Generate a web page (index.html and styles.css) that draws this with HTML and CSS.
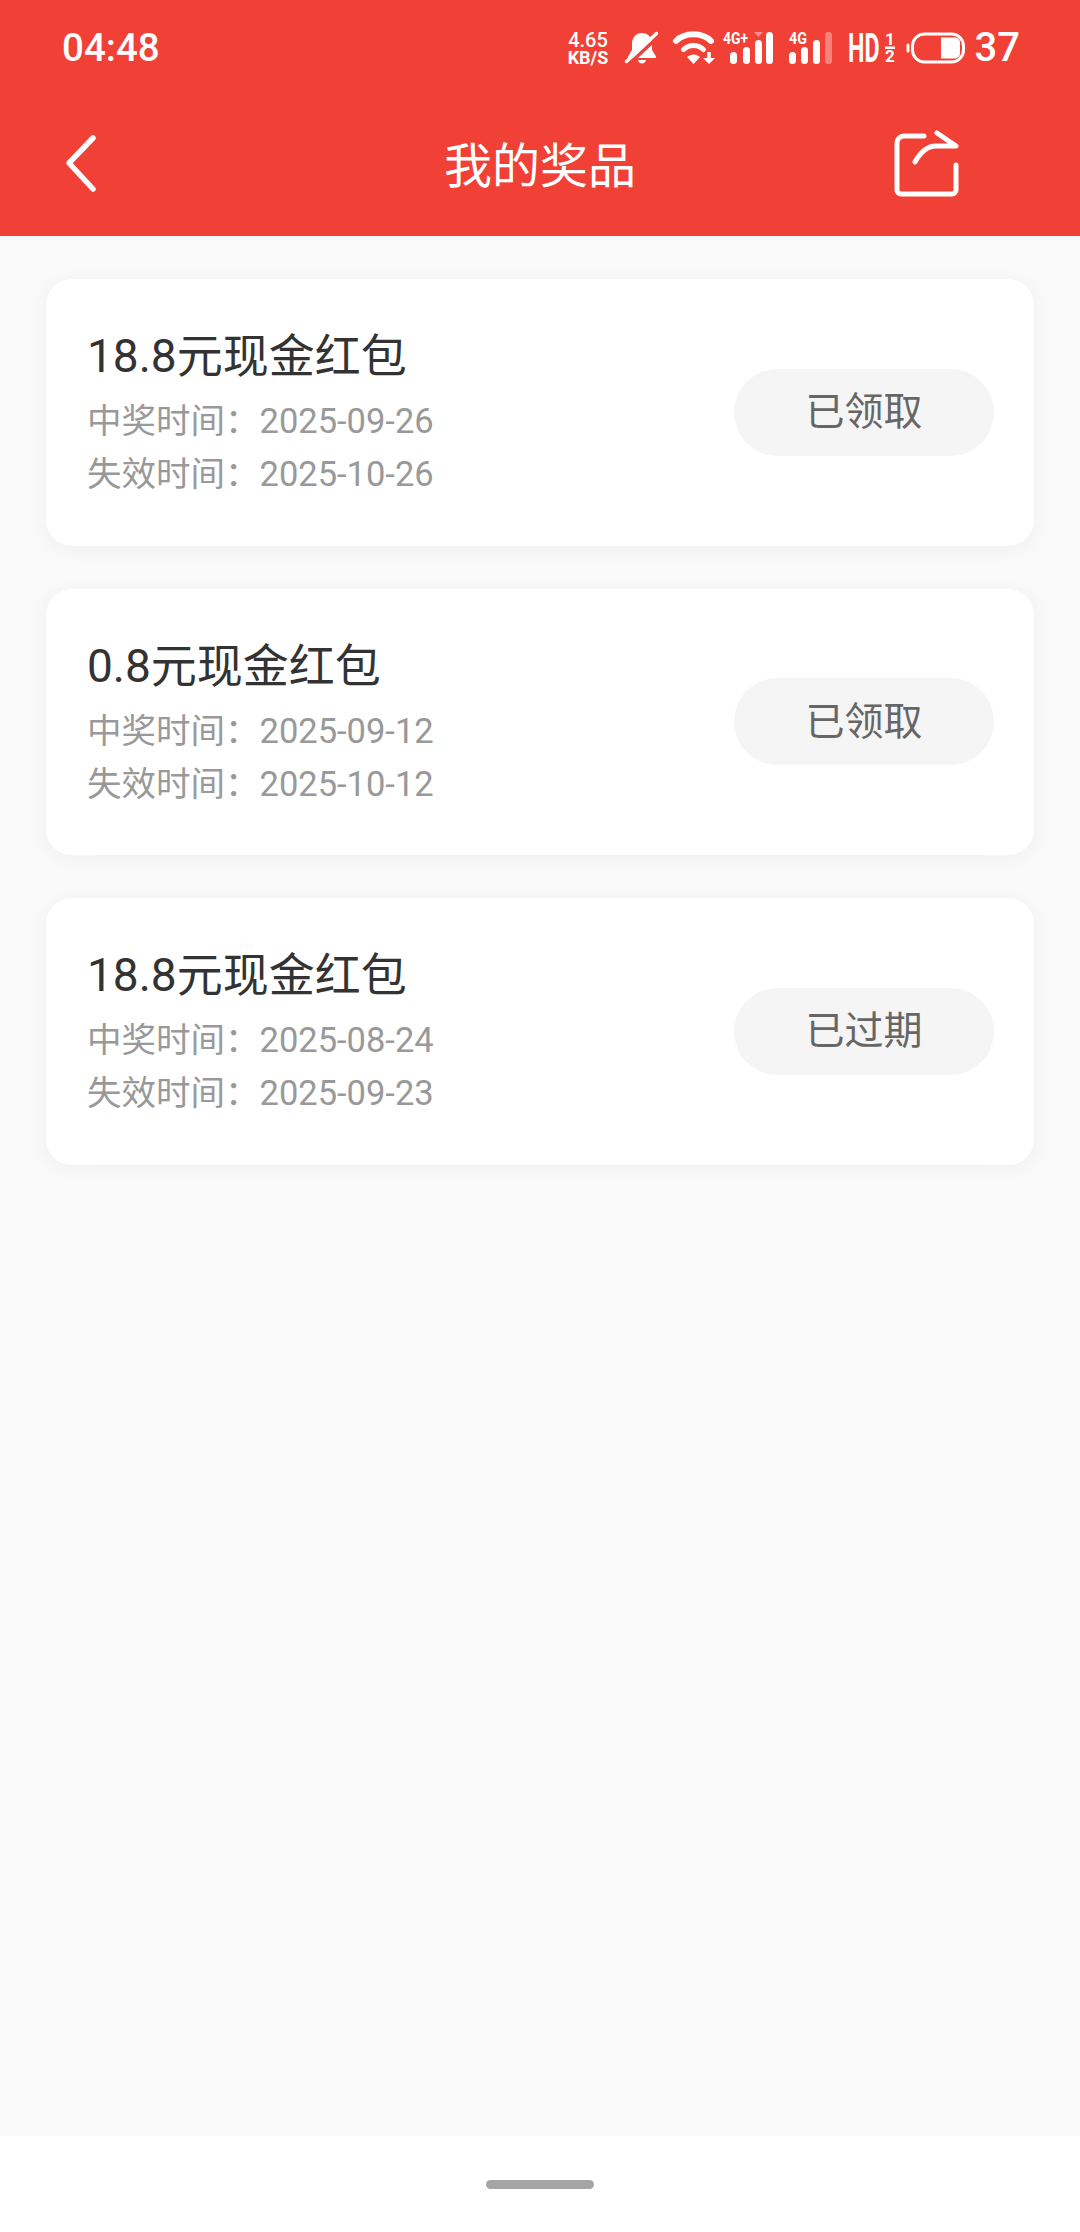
FILE: index.html
```html
<!DOCTYPE html>
<html lang="zh-CN">
<head>
    <meta charset="UTF-8">
    <meta name="viewport" content="width=device-width, initial-scale=1.0">
    <title>我的奖品</title>
    <link rel="stylesheet" href="styles.css">
</head>
<body>
    <header class="header">
        <div class="status-bar">
            <span class="time">04:48</span>
            <div class="status-icons">
                <div class="speed"><span>4.65</span><span>KB/S</span></div>
                <svg class="icon-bell" width="34" height="34" viewBox="0 0 34 34">
                    <path d="M17 2c-6 0-10 4.500-10 11v6l-4 6.500c-.4.800 0 1.500 1 1.500h26c1 0 1.400-.7 1-1.500l-4-6.500v-6C27 6.500 23 2 17 2z" fill="#fff"/>
                    <path d="M13 29h8c-.5 2-2 3.500-4 3.500S13.500 31 13 29z" fill="#fff"/>
                    <path d="M4 33L34 5" stroke="#f14035" stroke-width="3.500"/>
                    <path d="M1.500 30.500L31.500 2.500" stroke="#fff" stroke-width="3.500" stroke-linecap="round"/>
                </svg>
                <svg class="icon-wifi" width="43" height="34" viewBox="0 0 43 34">
                    <path d="M3 10C12 1 29 1 38 10" fill="none" stroke="#fff" stroke-width="6" stroke-linecap="round"/>
                    <path d="M10.500 18.500C16 13 25 13 30.500 18.500" fill="none" stroke="#fff" stroke-width="5" stroke-linecap="round"/>
                    <path d="M14 26c4-3.500 9-3.500 13 0l-6.500 7z" fill="#fff"/>
                    <path d="M36 21v7" stroke="#fff" stroke-width="3.500"/>
                    <path d="M30 27h12l-6 6z" fill="#fff"/>
                </svg>
                <svg class="icon-signal" width="50" height="34" viewBox="0 0 50 34">
                    <text class="net-label" x="0" y="13" textLength="25" lengthAdjust="spacingAndGlyphs">4G+</text>
                    <rect x="7" y="21" width="7" height="12" rx="3.500" fill="#fff"/>
                    <rect x="20" y="16" width="7" height="17" rx="3.500" fill="#fff"/>
                    <rect x="32" y="9" width="7" height="24" rx="3.500" fill="#fff"/>
                    <path d="M31 1h9l-4.500 5z" fill="#fff" opacity=".4"/>
                    <rect x="43" y="1" width="7" height="32" rx="3.500" fill="#fff"/>
                </svg>
                <svg class="icon-signal" width="45" height="34" viewBox="0 0 45 34">
                    <text class="net-label" x="1" y="13" textLength="18" lengthAdjust="spacingAndGlyphs">4G</text>
                    <rect x="1" y="21" width="7" height="12" rx="3.500" fill="#fff"/>
                    <rect x="13" y="16" width="7" height="17" rx="3.500" fill="#fff"/>
                    <rect x="25" y="9" width="7" height="24" rx="3.500" fill="#fff"/>
                    <rect x="37" y="1" width="7" height="32" rx="3" fill="#fff" opacity=".35"/>
                </svg>
                <svg class="icon-hd" width="48" height="34" viewBox="0 0 48 34">
                    <text class="hd-label" x="0" y="31" transform="scale(.58 1)">HD</text>
                    <text class="sim-label" x="37" y="14">1</text>
                    <rect x="37" y="15.500" width="10" height="2.500" fill="#fff"/>
                    <text class="sim-label" x="37" y="31">2</text>
                </svg>
                <svg class="icon-battery" width="59" height="32" viewBox="0 0 59 32">
                    <path d="M2 13v6" stroke="#fff" stroke-width="3" stroke-linecap="round"/>
                    <rect x="6.500" y="2" width="51" height="28" rx="12" fill="none" stroke="#fff" stroke-width="3"/>
                    <path d="M35 5.500h14a5 5 0 0 1 5 5v11a5 5 0 0 1-5 5H35z" fill="#fff"/>
                </svg>
                <span class="battery-level">37</span>
            </div>
        </div>
        <nav class="nav">
            <svg class="back" width="32" height="60" viewBox="0 0 32 60">
                <path d="M28 4L4 29l24 26" fill="none" stroke="#fff" stroke-width="5.500" stroke-linecap="round" stroke-linejoin="round"/>
            </svg>
            <h1>我的奖品</h1>
            <svg class="share" width="68" height="68" viewBox="0 0 68 68">
                <path d="M32 6H12a7 7 0 0 0-7 7v47a4 4 0 0 0 4 4h51a4 4 0 0 0 4-4V35" fill="none" stroke="#fff" stroke-width="5" stroke-linecap="round"/>
                <path d="M45 3l19 13H44c-9 0-16 7-21 16" fill="none" stroke="#fff" stroke-width="5" stroke-linecap="round" stroke-linejoin="round"/>
            </svg>
        </nav>
    </header>

    <main class="list">
        <div class="card">
            <div class="card-info">
                <h2>18.8元现金红包</h2>
                <p>中奖时间：2025-09-26</p>
                <p>失效时间：2025-10-26</p>
            </div>
            <span class="state">已领取</span>
        </div>
        <div class="card">
            <div class="card-info">
                <h2>0.8元现金红包</h2>
                <p>中奖时间：2025-09-12</p>
                <p>失效时间：2025-10-12</p>
            </div>
            <span class="state">已领取</span>
        </div>
        <div class="card">
            <div class="card-info">
                <h2>18.8元现金红包</h2>
                <p>中奖时间：2025-08-24</p>
                <p>失效时间：2025-09-23</p>
            </div>
            <span class="state">已过期</span>
        </div>
    </main>

    <div class="home-bar"><span class="home-handle"></span></div>
</body>
</html>
```

FILE: styles.css
```css
body {
    font-family: Roboto, "Noto Sans CJK SC", sans-serif;
    background-color: #f9f9f9;
    margin: 0;
    height: 2232px;
    display: flex;
    flex-direction: column;
    overflow: hidden;
}

svg {
    overflow: visible;
}

.header {
    background-color: #f14035;
    color: #fff;
}

.status-bar {
    height: 95px;
    display: flex;
    justify-content: space-between;
    align-items: center;
    padding: 0 60px 0 62px;
}

.time {
    font-size: 38.500px;
    font-weight: 500;
}

.status-icons {
    display: flex;
    align-items: center;
}

.speed {
    width: 43px;
    display: flex;
    flex-direction: column;
    align-items: center;
    font-size: 18px;
    font-weight: 700;
    line-height: 16px;
    margin-right: 15px;
}

.speed span:first-child {
    font-size: 20px;
    font-weight: 500;
    line-height: 20px;
}

.icon-bell { margin-right: 14px; }
.icon-wifi { margin-right: 7px; }
.icon-signal { margin-right: 15px; }
.icon-hd { margin-right: 10px; }
.icon-battery { margin-right: 10px; }

.net-label {
    font-size: 16px;
    font-weight: 700;
    fill: #fff;
}

.hd-label {
    font-size: 40px;
    font-weight: 700;
    fill: #fff;
}

.sim-label {
    font-size: 17px;
    font-weight: 700;
    fill: #fff;
}

.battery-level {
    font-size: 40px;
    font-weight: 500;
}

.nav {
    height: 141px;
    display: grid;
    grid-template-columns: 1fr auto 1fr;
    align-items: center;
    padding: 0 65px 4px;
    box-sizing: border-box;
}

.nav h1 {
    margin: 0;
    padding-bottom: 4px;
    font-size: 48px;
    font-weight: 400;
}

.nav .share {
    justify-self: end;
    margin-right: 55px;
}

.list {
    flex: 1;
    display: flex;
    flex-direction: column;
    gap: 43px;
    padding: 43px 46px 0;
}

.card {
    height: 266.500px;
    box-sizing: border-box;
    background-color: #fff;
    border-radius: 26px;
    box-shadow: 0 3px 20px rgba(0, 0, 0, 0.04);
    padding: 0 40px 0 41px;
    display: flex;
    justify-content: space-between;
    align-items: center;
}

.card-info {
    padding-top: 2px;
}

.card-info h2 {
    margin: 0 0 8px;
    font-size: 46px;
    font-weight: 400;
    line-height: 62px;
    color: #333;
}

.card-info p {
    margin: 0;
    font-size: 34.500px;
    line-height: 53px;
    color: #999;
}

.state {
    width: 260px;
    height: 87px;
    box-sizing: border-box;
    padding-bottom: 8px;
    border-radius: 44px;
    background-color: #f5f5f5;
    color: #666;
    font-size: 39px;
    display: flex;
    justify-content: center;
    align-items: center;
}

.home-bar {
    height: 96px;
    background-color: #fff;
    display: flex;
    justify-content: center;
    padding-top: 44px;
    box-sizing: border-box;
}

.home-handle {
    width: 108px;
    height: 9px;
    border-radius: 5px;
    background-color: #a5a5a5;
}
```
